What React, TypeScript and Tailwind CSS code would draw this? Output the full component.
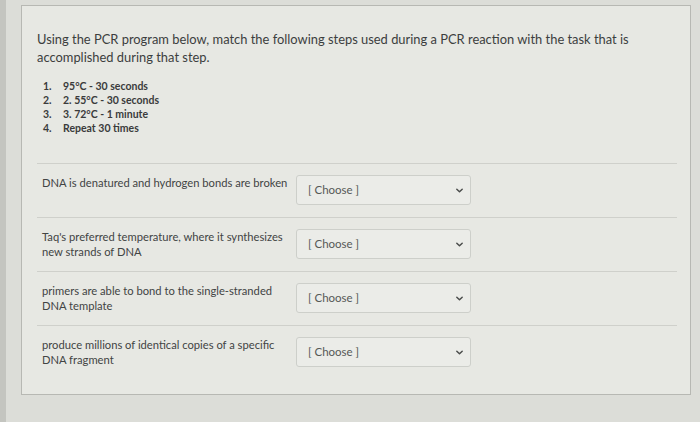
import React from "react";

const steps = [
  "95°C - 30 seconds",
  "2. 55°C - 30 seconds",
  "3. 72°C - 1 minute",
  "Repeat 30 times",
];

const rows = [
  "DNA is denatured and hydrogen bonds are broken",
  "Taq's preferred temperature, where it synthesizes new strands of DNA",
  "primers are able to bond to the single-stranded DNA template",
  "produce millions of identical copies of a specific DNA fragment",
];

const ChooseBox: React.FC = () => (
  <div className="ml-[2px] flex h-[30px] w-[175px] shrink-0 items-center justify-between rounded-[3px] border border-[#cdcfca] bg-[#ebece8] pl-[11px] pr-[6px] text-[11.5px] text-[#555856]">
    <span>[ Choose ]</span>
    <svg width="9" height="9" viewBox="0 0 10 10" className="text-[#4a4c4b]">
      <path d="M2 3.5 L5 6.5 L8 3.5" fill="none" stroke="currentColor" strokeWidth="1.6" strokeLinecap="round" strokeLinejoin="round" />
    </svg>
  </div>
);

export default function App() {
  return (
    <div
      className="flex h-[422px] w-[700px] overflow-hidden bg-[#dcddd8]"
      style={{ fontFamily: "Lato, 'Open Sans', sans-serif" }}
    >
      <div className="w-[6px] shrink-0 bg-[#c4c5c0]" />
      <div className="ml-[15px] mt-[5px] h-[390px] w-[670px] shrink-0 border border-[#b7b8b3] bg-[#e7e8e3] px-[15px] pt-[24px]">
        <p className="text-[12.9px] leading-[18px] text-[#3c3e3e]">
          Using the PCR program below, match the following steps used during a PCR reaction with the task that is
          <br />
          accomplished during that step.
        </p>
        <ol className="mt-[13px] text-[10.5px] font-bold leading-[14px] text-[#3a3b3b]">
          {steps.map((s, i) => (
            <li key={s} className="flex">
              <span className="w-[20px] pl-[6px]">{i + 1}.</span>
              <span className="pl-[6px]">{s}</span>
            </li>
          ))}
        </ol>
        <div className="mt-[28px] w-[640px]">
          {rows.map((r) => (
            <div key={r} className="flex items-start border-t border-[#cfd0cb] pb-[12px] pl-[5px] pt-[11px]">
              <div className="w-[252px] shrink-0 text-[11.2px] leading-[15px] text-[#424444]">{r}</div>
              <ChooseBox />
            </div>
          ))}
        </div>
      </div>
    </div>
  );
}
